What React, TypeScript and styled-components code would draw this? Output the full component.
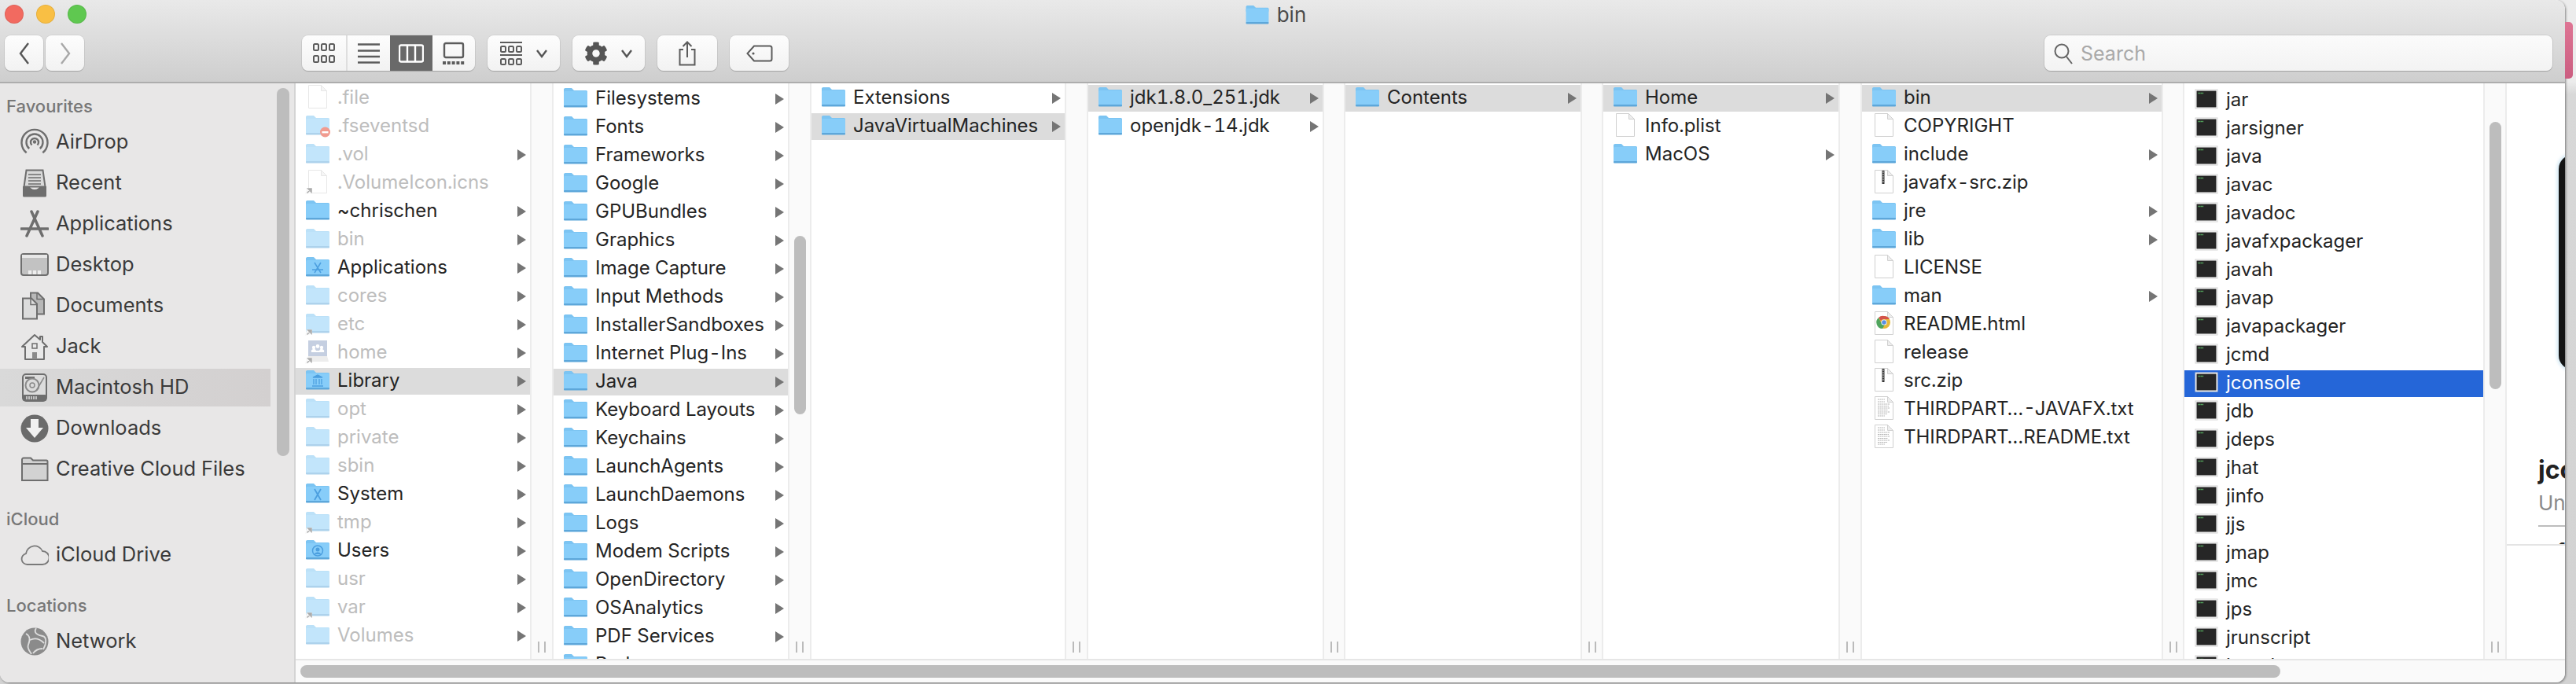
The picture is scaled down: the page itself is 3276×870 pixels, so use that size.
import React from "react";
import styled, { createGlobalStyle } from "styled-components";
import { FaCog } from "react-icons/fa";

type Kind = "folder" | "apps" | "library" | "system" | "users" | "doc" | "zip" | "text" | "chrome" | "exec" | "server";

interface Entry {
  name: string;
  kind: Kind;
  arrow?: boolean;
  dim?: boolean;
  alias?: boolean;
  blocked?: boolean;
  state?: "open" | "active";
}

const dir = (name: string, extra: Partial<Entry> = {}): Entry => ({ name, kind: "folder", arrow: true, ...extra });
const file = (name: string, kind: Kind = "doc"): Entry => ({ name, kind });
const tool = (name: string, state?: Entry["state"]): Entry => ({ name, kind: "exec", state });

const columns: { width: number; gap: number; pad: number; thumb?: [number, number]; items: Entry[] }[] = [
  {
    width: 298,
    gap: 30,
    pad: 2,
    items: [
      { name: ".file", kind: "doc", dim: true },
      { name: ".fseventsd", kind: "folder", dim: true, blocked: true },
      dir(".vol", { dim: true }),
      { name: ".VolumeIcon.icns", kind: "doc", dim: true, alias: true },
      dir("~chrischen"),
      dir("bin", { dim: true }),
      dir("Applications", { kind: "apps" }),
      dir("cores", { dim: true }),
      dir("etc", { dim: true, alias: true }),
      dir("home", { kind: "server", dim: true, alias: true }),
      dir("Library", { kind: "library", state: "open" }),
      dir("opt", { dim: true }),
      dir("private", { dim: true }),
      dir("sbin", { dim: true }),
      dir("System", { kind: "system" }),
      dir("tmp", { dim: true, alias: true }),
      dir("Users", { kind: "users" }),
      dir("usr", { dim: true }),
      dir("var", { dim: true, alias: true }),
      dir("Volumes", { dim: true }),
    ],
  },
  {
    width: 298,
    gap: 30,
    pad: 3,
    thumb: [194, 227],
    items: [
      dir("Filesystems"),
      dir("Fonts"),
      dir("Frameworks"),
      dir("Google"),
      dir("GPUBundles"),
      dir("Graphics"),
      dir("Image Capture"),
      dir("Input Methods"),
      dir("InstallerSandboxes"),
      dir("Internet Plug-Ins"),
      dir("Java", { state: "open" }),
      dir("Keyboard Layouts"),
      dir("Keychains"),
      dir("LaunchAgents"),
      dir("LaunchDaemons"),
      dir("Logs"),
      dir("Modem Scripts"),
      dir("OpenDirectory"),
      dir("OSAnalytics"),
      dir("PDF Services"),
      dir("Perl"),
    ],
  },
  { width: 322, gap: 30, pad: 2, items: [dir("Extensions"), dir("JavaVirtualMachines", { state: "open" })] },
  { width: 298, gap: 29, pad: 2, items: [dir("jdk1.8.0_251.jdk", { state: "open" }), dir("openjdk-14.jdk")] },
  { width: 299, gap: 29, pad: 2, items: [dir("Contents", { state: "open" })] },
  { width: 299, gap: 30, pad: 2, items: [dir("Home", { state: "open" }), file("Info.plist"), dir("MacOS")] },
  {
    width: 381,
    gap: 29,
    pad: 2,
    items: [
      dir("bin", { state: "open" }),
      file("COPYRIGHT"),
      dir("include"),
      file("javafx-src.zip", "zip"),
      dir("jre"),
      dir("lib"),
      file("LICENSE"),
      dir("man"),
      file("README.html", "chrome"),
      file("release"),
      file("src.zip", "zip"),
      file("THIRDPART…-JAVAFX.txt", "text"),
      file("THIRDPART…README.txt", "text"),
    ],
  },
  {
    width: 380,
    gap: 30,
    pad: 5,
    thumb: [49, 340],
    items: [
      tool("jar"),
      tool("jarsigner"),
      tool("java"),
      tool("javac"),
      tool("javadoc"),
      tool("javafxpackager"),
      tool("javah"),
      tool("javap"),
      tool("javapackager"),
      tool("jcmd"),
      tool("jconsole", "active"),
      tool("jdb"),
      tool("jdeps"),
      tool("jhat"),
      tool("jinfo"),
      tool("jjs"),
      tool("jmap"),
      tool("jmc"),
      tool("jps"),
      tool("jrunscript"),
      tool("jstatd"),
    ],
  },
];

const Folder = ({ glyph }: { glyph?: React.ReactNode }) => (
  <>
    <path d="M1 7.5a2 2 0 0 1 2-2.5h8l3 3h15.500a1.500 1.500 0 0 1 1.500 1.500V13H1z" fill="#7cc4f2" />
    <rect x="1" y="9" width="30" height="20" rx="1.500" fill="#87cdf9" />
    <rect x="1" y="27" width="30" height="2.500" rx="1" fill="#5da7da" />
    {glyph}
  </>
);

const Page = () => (
  <>
    <path d="M4.500 2.500h16l7 7v22h-23z" fill="#fff" stroke="#d0d0d0" />
    <path d="M20.500 2.500v7h7z" fill="#eee" stroke="#d0d0d0" />
  </>
);

function EntryIcon({ entry }: { entry: Entry }) {
  const { kind, alias, blocked } = entry;
  const glyphColor = "#4c9fdf";
  return (
    <svg width="32" height="34" viewBox="0 2 32 34">
      {kind === "folder" && <Folder />}
      {kind === "apps" && (
        <Folder
          glyph={
            <path d="M12 12l8 13M20 12l-8 13M9 21h14" stroke={glyphColor} strokeWidth="1.500" fill="none" />
          }
        />
      )}
      {kind === "library" && (
        <Folder
          glyph={
            <path d="M10 14l6-3 6 3zM11 16v7M14 16v7M18 16v7M21 16v7M9 25h14" stroke={glyphColor} strokeWidth="1.300" fill={glyphColor} />
          }
        />
      )}
      {kind === "system" && (
        <Folder glyph={<path d="M12 12l8 14M20 12l-8 14" stroke={glyphColor} strokeWidth="1.800" fill="none" />} />
      )}
      {kind === "users" && (
        <Folder
          glyph={
            <>
              <circle cx="16" cy="18.500" r="6.500" fill="none" stroke={glyphColor} strokeWidth="1.500" />
              <circle cx="16" cy="17" r="2.500" fill={glyphColor} />
              <path d="M11.500 23a5 5 0 0 1 9 0z" fill={glyphColor} />
            </>
          }
        />
      )}
      {kind === "server" && (
        <>
          <rect x="4" y="3" width="24" height="20" fill="#8da0c4" />
          <circle cx="11" cy="12" r="2.200" fill="#fff" />
          <circle cx="16" cy="10.500" r="2.400" fill="#fff" />
          <circle cx="21" cy="12" r="2.200" fill="#fff" />
          <path d="M8 18a3 3 0 0 1 6-2h4a3 3 0 0 1 6 2z" fill="#fff" />
          <path d="M4 23h24l2 7H2z" fill="#dcdcdc" />
        </>
      )}
      {kind === "doc" && <Page />}
      {kind === "zip" && (
        <>
          <Page />
          <rect x="13.500" y="3" width="3" height="17" fill="#333" />
          <path d="M14 5h2M14 8h2M14 11h2M14 14h2M14 17h2" stroke="#eee" strokeWidth="0.800" />
        </>
      )}
      {kind === "text" && (
        <>
          <Page />
          <path
            d="M8 6h9M8 9h9M8 12h15M8 14.500h14M8 17h15M8 19.500h13M8 22h15M8 24.500h12M8 27h9"
            stroke="#aaa"
            strokeWidth="0.900"
            strokeDasharray="2 0.600"
          />
        </>
      )}
      {kind === "chrome" && (
        <>
          <Page />
          <circle cx="16" cy="16" r="8" fill="#e5b93b" />
          <path d="M16 8a8 8 0 0 1 7 4h-7a4 4 0 0 0-4 2l-3-4a8 8 0 0 1 7-2z" fill="#d4534a" />
          <path d="M9 10a8 8 0 0 0 5 14l3-5-5-3z" fill="#4fa45d" />
          <circle cx="16" cy="16" r="3.600" fill="#fff" />
          <circle cx="16" cy="16" r="2.800" fill="#5a8fe3" />
        </>
      )}
      {kind === "exec" && (
        <>
          <rect x="2" y="5" width="28" height="24" fill="#fff" stroke="#d4d4d4" />
          <rect x="3.500" y="6.500" width="25" height="21" fill="#262626" />
          <path d="M5.500 9.500h7" stroke="#5fc46a" strokeWidth="1.300" strokeDasharray="1.200 0.600" />
        </>
      )}
      {alias && (
        <>
          <path d="M0 33l2-8h7v6z" fill="#f4f4f4" />
          <path d="M2.500 31.500l5-5M3.800 26h4.200v4.200z" stroke="#5a5a5a" strokeWidth="1.500" fill="#5a5a5a" />
        </>
      )}
      {blocked && (
        <>
          <circle cx="25.500" cy="26" r="6.500" fill="#e53a22" />
          <rect x="21.500" y="25" width="8" height="2.400" fill="#fff" />
        </>
      )}
    </svg>
  );
}

const stroke = { stroke: "#6e6e6e", strokeWidth: 2, fill: "none" };

const sidebarIcons: Record<string, React.ReactNode> = {
  airdrop: (
    <g {...stroke} strokeWidth={2.400}>
      <path d="M7.700 31.300A16.500 16.500 0 1 1 28.300 31.300" />
      <path d="M11.200 26A10.500 10.500 0 1 1 24.800 26" />
      <path d="M14.500 21.500A5 5 0 1 1 21.500 21.500" />
      <circle cx="18" cy="17.500" r="1" fill="#6e6e6e" />
    </g>
  ),
  recent: (
    <>
      <path d="M7.500 1.500h21l3 21h-27z" fill="#d9d9d9" stroke="#6e6e6e" strokeWidth="2" />
      <path d="M10 7h16M10 11h16M10 15h16M10 19h16" stroke="#6e6e6e" strokeWidth="1.400" />
      <path d="M3 22h9a6 4 0 0 0 12 0h9v12a1.500 1.500 0 0 1-1.500 1.500h-27A1.500 1.500 0 0 1 3 34z" fill="#6e6e6e" />
    </>
  ),
  apps: (
    <path
      d="M14 2l14 31M22 2L8 33M1 24h34"
      stroke="#6e6e6e"
      strokeWidth="3.500"
      strokeLinecap="round"
      fill="none"
    />
  ),
  desktop: (
    <>
      <rect x="1" y="4" width="34" height="27" rx="3" fill="#c2c2c2" stroke="#6e6e6e" strokeWidth="2" />
      <rect x="2" y="5" width="32" height="4" fill="#e8e8e8" />
      <path d="M10 25h4v5h-4zM16 25h4v5h-4zM22 25h4v5h-4z" fill="#eee" />
    </>
  ),
  documents: (
    <>
      <path d="M13 1.500h9l8 8v19H13z" fill="#b8b8b8" stroke="#6e6e6e" strokeWidth="2" />
      <path d="M3 8.500h11l7 7v19H3z" fill="#dcdcdc" stroke="#6e6e6e" strokeWidth="2" />
      <path d="M13 8.500v8h8M21 1.500v8h8" fill="none" stroke="#6e6e6e" strokeWidth="1.500" />
    </>
  ),
  home: (
    <>
      <path d="M18 3L2 18h4v16h24V18h4l-6-6V5h-3v4z" fill="#e9e9e9" stroke="#6e6e6e" strokeWidth="2" strokeLinejoin="round" />
      <rect x="15" y="14" width="6" height="6" fill="none" stroke="#6e6e6e" strokeWidth="1.500" />
      <rect x="15" y="25" width="6" height="9" fill="#8a8a8a" />
    </>
  ),
  hd: (
    <>
      <rect x="3" y="1" width="30" height="34" rx="4" fill="#dcdcdc" stroke="#6e6e6e" strokeWidth="2" />
      <path d="M6 4h12v3H6z" fill="#6e6e6e" />
      <circle cx="15" cy="15" r="8.500" fill="none" stroke="#8a8a8a" strokeWidth="2" />
      <circle cx="15" cy="15" r="3" fill="none" stroke="#8a8a8a" strokeWidth="1.500" />
      <path d="M30 5L20 22" stroke="#8a8a8a" strokeWidth="1.500" />
      <rect x="3" y="27" width="30" height="8" rx="2" fill="#6e6e6e" />
      <path d="M8 29v4M11 29v4M14 29v4M17 29v4M20 29v4" stroke="#ddd" strokeWidth="1.500" />
    </>
  ),
  downloads: (
    <>
      <circle cx="18" cy="18" r="17.500" fill="#6b6b6b" />
      <path d="M13 6h10v11h6L18 30 7 17h6z" fill="#f1f1f1" />
    </>
  ),
  creative: (
    <path
      d="M2 5.500a2 2 0 0 1 2-2h9l3 3h17a1.500 1.500 0 0 1 1.500 1.500v24H2zM2 11h32.500"
      fill="#d2d2d2"
      stroke="#6e6e6e"
      strokeWidth="2"
    />
  ),
  cloud: (
    <path
      d="M9 30a7 7 0 0 1-2-13.800A11 11 0 0 1 28 13a8.500 8.500 0 0 1 0 17z"
      fill="none"
      stroke="#7a7a7a"
      strokeWidth="1.800"
    />
  ),
  network: (
    <>
      <circle cx="18" cy="18" r="17.500" fill="#8b8b8b" />
      <path
        d="M7 8c6 3 5 9 3 14s2 8 4 12M20 1c-4 6 2 9 8 10s5 10 1 17M12 16c6-3 12-2 18 4M16 33c3-4 7-6 12-6"
        stroke="#dedede"
        strokeWidth="1.800"
        fill="none"
      />
    </>
  ),
};

const sidebar = [
  {
    title: "Favourites",
    height: 49,
    items: [
      ["airdrop", "AirDrop"],
      ["recent", "Recent"],
      ["apps", "Applications"],
      ["desktop", "Desktop"],
      ["documents", "Documents"],
      ["home", "Jack"],
      ["hd", "Macintosh HD"],
      ["downloads", "Downloads"],
      ["creative", "Creative Cloud Files"],
    ],
  },
  { title: "iCloud", height: 57, items: [["cloud", "iCloud Drive"]] },
  { title: "Locations", height: 58, items: [["network", "Network"]] },
];

export default function App() {
  return (
    <>
      <GlobalStyle />
      <Desk>
        <Window>
          <Toolbar>
            <TitleBar>
              <Lights>
                <Light $color="#f26a60" />
                <Light $color="#f9bf44" />
                <Light $color="#5fc850" />
              </Lights>
              <WindowTitle>
                <svg width="32" height="26" viewBox="0 3 32 27">
                  <Folder />
                </svg>
                bin
              </WindowTitle>
            </TitleBar>
            <ToolRow>
              <NavGroup>
                <ToolButton $w={49}>
                  <svg width="16" height="30" viewBox="0 0 16 30">
                    <path d="M13 2L3 15l10 13" fill="none" stroke="#555" strokeWidth="2.400" />
                  </svg>
                </ToolButton>
                <ToolButton $w={49}>
                  <svg width="16" height="30" viewBox="0 0 16 30">
                    <path d="M3 2l10 13L3 28" fill="none" stroke="#a8a8a8" strokeWidth="2.400" />
                  </svg>
                </ToolButton>
              </NavGroup>
              <ViewGroup>
                <Segment $w={58} $divider>
                  <svg width="30" height="30" viewBox="0 0 30 30">
                    <g fill="none" stroke="#5c5c5c" strokeWidth="2">
                      <rect x="2" y="3" width="6" height="8" rx="1.500" />
                      <rect x="12" y="3" width="6" height="8" rx="1.500" />
                      <rect x="22" y="3" width="6" height="8" rx="1.500" />
                      <rect x="2" y="18" width="6" height="8" rx="1.500" />
                      <rect x="12" y="18" width="6" height="8" rx="1.500" />
                      <rect x="22" y="18" width="6" height="8" rx="1.500" />
                    </g>
                  </svg>
                </Segment>
                <Segment $w={54}>
                  <svg width="30" height="30" viewBox="0 0 30 30">
                    <path d="M1 3.500h28M1 11.500h28M1 19h28M1 26.500h28" stroke="#5c5c5c" strokeWidth="2.400" />
                  </svg>
                </Segment>
                <Segment $w={54} $active>
                  <svg width="32" height="24" viewBox="0 0 32 24">
                    <rect x="1" y="1.500" width="30" height="21" rx="2" fill="none" stroke="#fff" strokeWidth="2.400" />
                    <path d="M11 2v20M21 2v20" stroke="#fff" strokeWidth="2.400" />
                  </svg>
                </Segment>
                <Segment $w={54}>
                  <svg width="30" height="30" viewBox="0 0 30 30">
                    <rect x="3" y="2" width="24" height="18" rx="2" fill="none" stroke="#5c5c5c" strokeWidth="2.400" />
                    <path d="M1 27h28" stroke="#5c5c5c" strokeWidth="4" strokeDasharray="4 1.800" />
                  </svg>
                </Segment>
              </ViewGroup>
              <ToolButton $w={92}>
                <svg width="30" height="32" viewBox="0 0 30 32">
                  <g stroke="#5c5c5c">
                    <path d="M1 2h28M1 18h28" strokeWidth="2" />
                    <g fill="none" strokeWidth="2">
                      <rect x="2" y="7" width="6" height="7" rx="1.500" />
                      <rect x="12" y="7" width="6" height="7" rx="1.500" />
                      <rect x="22" y="7" width="6" height="7" rx="1.500" />
                      <rect x="2" y="23" width="6" height="7" rx="1.500" />
                      <rect x="12" y="23" width="6" height="7" rx="1.500" />
                      <rect x="22" y="23" width="6" height="7" rx="1.500" />
                    </g>
                  </g>
                </svg>
                <Chevron />
              </ToolButton>
              <ToolButton $w={92}>
                <FaCog size={30} color="#555" />
                <Chevron />
              </ToolButton>
              <ToolButton $w={76}>
                <svg width="24" height="32" viewBox="0 0 24 32">
                  <path d="M7 11H2.500v19.500h19V11H17" fill="none" stroke="#5c5c5c" strokeWidth="2" />
                  <path d="M12 21V2M6.500 7L12 1.500 17.500 7" fill="none" stroke="#5c5c5c" strokeWidth="2" />
                </svg>
              </ToolButton>
              <ToolButton $w={75}>
                <svg width="34" height="22" viewBox="0 0 34 22">
                  <path
                    d="M10 1.500h20a2.500 2.500 0 0 1 2.500 2.500v14a2.500 2.500 0 0 1-2.500 2.500H10L1.500 11z"
                    fill="none"
                    stroke="#5c5c5c"
                    strokeWidth="2"
                  />
                  <circle cx="9" cy="11" r="1.600" fill="#5c5c5c" />
                </svg>
              </ToolButton>
              <SearchField>
                <svg width="26" height="30" viewBox="0 0 26 30">
                  <circle cx="11" cy="12" r="8.500" fill="none" stroke="#666" strokeWidth="2" />
                  <path d="M17 19l7 9" stroke="#666" strokeWidth="2" />
                </svg>
                Search
              </SearchField>
            </ToolRow>
          </Toolbar>
          <Main>
            <Sidebar>
              <SidebarList>
                {sidebar.map((section) => (
                  <SidebarSection key={section.title}>
                    <SectionTitle $h={section.height}>{section.title}</SectionTitle>
                    {section.items.map(([icon, label]) => (
                      <SidebarRow key={label} $selected={label === "Macintosh HD"}>
                        <svg width="36" height="36" viewBox="0 0 36 36">
                          {sidebarIcons[icon]}
                        </svg>
                        <SidebarLabel>{label}</SidebarLabel>
                      </SidebarRow>
                    ))}
                  </SidebarSection>
                ))}
              </SidebarList>
              <SidebarGutter>
                <ScrollThumb $top={6} $h={468} $w={16} />
              </SidebarGutter>
            </Sidebar>
            <Browser>
              <ColumnArea>
                {columns.map((column, i) => (
                  <React.Fragment key={i}>
                    <Column $w={column.width} $pad={column.pad}>
                      {column.items.map((entry) => (
                        <Row key={entry.name} $state={entry.state} $dim={entry.dim}>
                          <IconSlot $dim={entry.dim}>
                            <EntryIcon entry={entry} />
                          </IconSlot>
                          <RowName>{entry.name}</RowName>
                          {entry.arrow && <Arrow />}
                        </Row>
                      ))}
                    </Column>
                    <Strip $w={column.gap}>
                      {column.thumb && <ScrollThumb $top={column.thumb[0]} $h={column.thumb[1]} $w={15} />}
                      <Grip />
                    </Strip>
                  </React.Fragment>
                ))}
                <Preview>
                  <PreviewClip>
                    <BigIcon />
                    <PreviewName>jconsole</PreviewName>
                    <PreviewKind>Unix Executable</PreviewKind>
                    <PreviewRule />
                    <PreviewHeading>Information</PreviewHeading>
                  </PreviewClip>
                </Preview>
              </ColumnArea>
              <HScrollTrack>
                <HScrollThumb />
              </HScrollTrack>
            </Browser>
          </Main>
        </Window>
        <Sliver />
      </Desk>
    </>
  );
}

const Chevron = () => (
  <svg width="16" height="12" viewBox="0 0 16 12">
    <path d="M2 2l6 8 6-8" fill="none" stroke="#555" strokeWidth="2.400" />
  </svg>
);

const GlobalStyle = createGlobalStyle`
  html, body {
    margin: 0;
    padding: 0;
    background: #cfcfcf;
  }
  body {
    font-family: Inter, "Liberation Sans", sans-serif;
    font-variant-numeric: tabular-nums;
  }
`;

const Desk = styled.div`
  width: 3276px;
  height: 870px;
  display: flex;
  align-items: flex-start;
  overflow: hidden;
  background: linear-gradient(180deg, #ececec 0, #ececec 104px, #d8d8d8 120px, #d2d2d2 100%);
`;

const Window = styled.div`
  width: 3262px;
  height: 868px;
  flex: none;
  display: flex;
  flex-direction: column;
  border-radius: 0 12px 12px 12px;
  overflow: hidden;
  background: #fff;
  box-shadow: 1px 1px 3px rgba(0, 0, 0, 0.45);
`;

const Sliver = styled.div`
  width: 10px;
  height: 72px;
  margin-top: 28px;
  border-radius: 0 5px 5px 0;
  background: linear-gradient(180deg, #de7594, #cb5d80);
`;

const Toolbar = styled.header`
  height: 106px;
  flex: none;
  box-sizing: border-box;
  border-bottom: 2px solid #adadad;
  background: linear-gradient(180deg, #e9e9e9, #cecece);
`;

const TitleBar = styled.div`
  height: 36px;
  display: flex;
  align-items: center;
  padding-left: 6px;
`;

const Lights = styled.div`
  display: flex;
  gap: 16px;
`;

const Light = styled.span<{ $color: string }>`
  width: 24px;
  height: 24px;
  border-radius: 50%;
  background: ${(p) => p.$color};
  box-shadow: inset 0 0 0 1px rgba(0, 0, 0, 0.08);
`;

const WindowTitle = styled.div`
  flex: 1;
  display: flex;
  align-items: center;
  justify-content: center;
  gap: 9px;
  padding-right: 128px;
  font-size: 26px;
  color: #4a4a4a;
`;

const ToolRow = styled.div`
  margin-top: 9px;
  padding: 0 16px 0 6px;
  display: flex;
  gap: 16px;
`;

const NavGroup = styled.div`
  display: flex;
  gap: 3px;
`;

const ToolButton = styled.div<{ $w: number }>`
  width: ${(p) => p.$w}px;
  height: 45px;
  box-sizing: border-box;
  display: flex;
  align-items: center;
  justify-content: center;
  gap: 16px;
  border-radius: 8px;
  background: linear-gradient(180deg, #fdfdfd, #f2f2f2);
  box-shadow: 0 1px 1px #a5a5a5, 0 0 0 1px rgba(0, 0, 0, 0.05);
`;

const ViewGroup = styled.div`
  margin-left: 261px;
  display: flex;
  border-radius: 8px;
  overflow: hidden;
  box-shadow: 0 1px 1px #a5a5a5, 0 0 0 1px rgba(0, 0, 0, 0.05);
  background: linear-gradient(180deg, #fdfdfd, #f2f2f2);
`;

const Segment = styled.div<{ $w: number; $active?: boolean; $divider?: boolean }>`
  width: ${(p) => p.$w}px;
  height: 45px;
  box-sizing: border-box;
  display: flex;
  align-items: center;
  justify-content: center;
  background: ${(p) => (p.$active ? "#696969" : "transparent")};
  border-right: ${(p) => (p.$divider ? "2px solid #dedede" : "none")};
`;

const SearchField = styled.div`
  margin-left: auto;
  width: 646px;
  height: 45px;
  box-sizing: border-box;
  padding-left: 11px;
  display: flex;
  align-items: center;
  gap: 9px;
  border-radius: 8px;
  font-size: 25px;
  color: #a9a9a9;
  background: linear-gradient(180deg, #fbfbfb, #f3f3f3);
  box-shadow: 0 1px 1px #a5a5a5, 0 0 0 1px rgba(0, 0, 0, 0.08);
`;

const Main = styled.div`
  flex: 1;
  min-height: 0;
  display: flex;
`;

const Sidebar = styled.aside`
  width: 376px;
  flex: none;
  box-sizing: border-box;
  display: flex;
  background: #e8e7e7;
  border-right: 2px solid #d4d4d4;
`;

const SidebarList = styled.nav`
  width: 344px;
  flex: none;
`;

const SidebarSection = styled.section`
  display: flex;
  flex-direction: column;
`;

const SidebarGutter = styled.div`
  flex: 1;
  padding-left: 8px;
`;

const SectionTitle = styled.h3<{ $h: number }>`
  margin: 0;
  height: ${(p) => p.$h}px;
  box-sizing: border-box;
  padding: 0 0 7px 8px;
  display: flex;
  align-items: flex-end;
  font-size: 22px;
  line-height: 26px;
  font-weight: 500;
  color: #777;
`;

const SidebarRow = styled.div<{ $selected?: boolean }>`
  height: 48px;
  margin: 2px 0;
  padding-left: 26px;
  display: flex;
  align-items: center;
  gap: 9px;
  font-size: 25.500px;
  color: #3a3a3a;
  background: ${(p) => (p.$selected ? "linear-gradient(90deg, #d9d9d9, #d3d0d0)" : "transparent")};
`;

const SidebarLabel = styled.span`
  padding-bottom: 3px;
`;

const Browser = styled.div`
  flex: 1;
  min-width: 0;
  display: flex;
  flex-direction: column;
`;

const ColumnArea = styled.div`
  flex: 1;
  min-height: 0;
  display: flex;
  overflow: hidden;
`;

const Column = styled.div<{ $w: number; $pad: number }>`
  width: ${(p) => p.$w}px;
  flex: none;
  box-sizing: border-box;
  padding-top: ${(p) => p.$pad}px;
  overflow: hidden;
`;

const Row = styled.div<{ $state?: "open" | "active"; $dim?: boolean }>`
  height: 34px;
  margin-bottom: 2px;
  padding: 0 5px 0 12px;
  display: flex;
  align-items: center;
  gap: 9px;
  font-size: 24px;
  white-space: nowrap;
  color: ${(p) => (p.$state === "active" ? "#fff" : p.$dim ? "#bdbdbd" : "#242424")};
  background: ${(p) =>
    p.$state === "active" ? "#2566d8" : p.$state === "open" ? "#dcdcdc" : "transparent"};
`;

const IconSlot = styled.span<{ $dim?: boolean }>`
  width: 32px;
  height: 34px;
  flex: none;
  opacity: ${(p) => (p.$dim ? 0.5 : 1)};
`;

const RowName = styled.span`
  flex: 1;
  min-width: 0;
  padding-bottom: 3px;
`;

const Arrow = styled.span`
  width: 0;
  height: 0;
  flex: none;
  border-left: 11px solid #757575;
  border-top: 7px solid transparent;
  border-bottom: 7px solid transparent;
`;

const Strip = styled.div<{ $w: number }>`
  width: ${(p) => p.$w}px;
  flex: none;
  box-sizing: border-box;
  display: flex;
  flex-direction: column;
  align-items: center;
  background: #fafafa;
  border-left: 2px solid #ececec;
  border-right: 2px solid #ececec;
`;

const ScrollThumb = styled.div<{ $top: number; $h: number; $w: number }>`
  width: ${(p) => p.$w}px;
  height: ${(p) => p.$h}px;
  margin-top: ${(p) => p.$top}px;
  border-radius: 8px;
  flex: none;
  background: #bdbdbd;
`;

const Grip = styled.div`
  width: 10px;
  height: 14px;
  margin-top: auto;
  margin-bottom: 8px;
  box-sizing: border-box;
  border-left: 2px solid #bbb;
  border-right: 2px solid #bbb;
`;

const Preview = styled.div`
  flex: 1;
  min-width: 0;
  overflow: hidden;
`;

const PreviewClip = styled.div`
  height: 588px;
  box-sizing: border-box;
  overflow: hidden;
  padding: 91px 0 0 40px;
  border-bottom: 2px solid #e4e4e4;
  white-space: nowrap;
`;

const BigIcon = styled.div`
  width: 280px;
  height: 273px;
  margin-left: 26px;
  border-radius: 18px;
  background: #141414;
  box-shadow: 0 0 4px 2px #cfe6f2;
`;

const PreviewName = styled.div`
  margin-top: 108px;
  font-size: 32px;
  line-height: 40px;
  font-weight: 700;
  color: #222;
`;

const PreviewKind = styled.div`
  margin-top: 6px;
  font-size: 26px;
  line-height: 32px;
  color: #8a8a8a;
`;

const PreviewRule = styled.div`
  height: 2px;
  margin-top: 12px;
  width: 300px;
  background: #bdbdbd;
`;

const PreviewHeading = styled.div`
  margin-top: 16px;
  font-size: 26px;
  line-height: 32px;
  font-weight: 700;
  color: #222;
`;

const HScrollTrack = styled.div`
  height: 30px;
  flex: none;
  box-sizing: border-box;
  padding: 6px 0 0 6px;
  background: #fafafa;
  border-top: 2px solid #e6e6e6;
`;

const HScrollThumb = styled.div`
  width: 2518px;
  height: 16px;
  border-radius: 8px;
  background: #bdbdbd;
`;
